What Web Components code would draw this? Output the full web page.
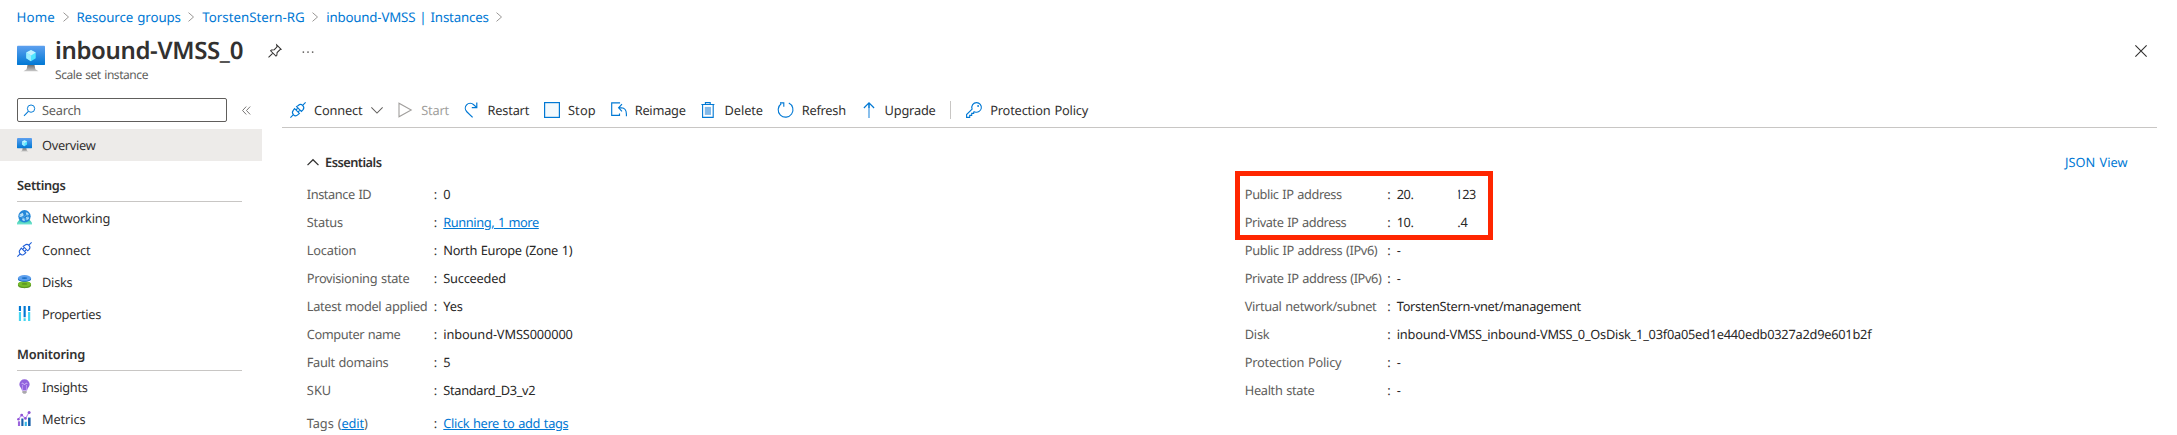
<!DOCTYPE html>
<html lang="en">
<head>
<meta charset="utf-8">
<title>inbound-VMSS_0 - Azure</title>
<style>
html,body{margin:0;background:#fff;}
body{width:2177px;height:435px;overflow:hidden;font:12.8px/20px "Noto Sans","Open Sans",sans-serif;color:#323130;text-rendering:geometricPrecision;word-spacing:.8px;}
</style>
</head>
<body>
<az-blade></az-blade>
<script>
const ICONS = {
  vm:'<defs><linearGradient id="a" x1="0" y1="0" x2="0" y2="1"><stop offset="0" stop-color="#5ea0ef"/><stop offset="1" stop-color="#0078d4"/></linearGradient><linearGradient id="b" x1="0" y1="0" x2="0" y2="1"><stop offset="0" stop-color="#707070"/><stop offset="1" stop-color="#c8c8c8"/></linearGradient></defs><path d="M6 12h4l.5 2.4 1.8 1.1H3.7l1.8-1.1z" fill="url(#b)"/><rect y="1" width="16" height="11" rx=".5" fill="url(#a)"/><path d="M8 3.4l2.7 1.5v3.2L8 9.8 5.3 8.1V4.9z" fill="#50e6ff"/><path d="M8 3.4l2.7 1.5L8 6.5 5.3 4.9z" fill="#c3f1ff"/><path d="M5.3 4.9L8 6.5v3.3L5.3 8.1z" fill="#9cebff"/>',
  plug:'<g fill="none" stroke="currentColor" stroke-width="1.15"><path d="M.4 15.6l3-3M12.6 3.4l3-3"/><path d="M4.6 6.6L9.4 11.4 8 12.7c-1.3 1.2-3.3 1.3-4.500.1s-1.200-3.300-.1-4.600z"/><path d="M6.600 4.600l4.800 4.800 1.300-1.300c1.200-1.300 1.300-3.300.1-4.500s-3.300-1.200-4.500-.1z"/><path d="M5.900 8l1.700-1.700M8 10.100l1.700-1.700"/></g>',
  play:'<path d="M2 1.2v13.6L14.2 8z" fill="none" stroke="#a19f9d" stroke-width="1.1"/>',
  restart:'<path d="M8.6 15.4L2.8 9.7A5 5 0 0 1 2.6 2.8a5 5 0 0 1 7.1-.1L12.6 5.4M12.8.6v5H7.8" fill="none" stroke="#0078d4" stroke-width="1.2"/>',
  stop:'<rect x=".6" y=".6" width="14.8" height="14.8" fill="#f3f9fd" stroke="#0078d4" stroke-width="1.2"/>',
  reimage:'<path d="M8.5 1.5V.8H.7v12.6h7.8v-2M11 2.2L7.6 5.8 11 9.4M7.8 5.8h2.6c3.3.2 5 2.7 5 6.3v2.2" fill="none" stroke="#0078d4" stroke-width="1.15"/>',
  trash:'<path d="M1.4 2.5h13M5.4 2.3V.6h4.8v1.7M2.6 2.7v12.7h10.6V2.7" fill="none" stroke="#0078d4" stroke-width="1.1"/><path d="M4.8 4.9h6.2v8H4.8z" fill="#83b9e8"/>',
  refresh:'<path d="M3.2 1.8A7.4 7.4 0 1 0 10.8 1.1M2 .9h3.8v3.9" fill="none" stroke="#0078d4" stroke-width="1.1"/>',
  up:'<path d="M8 2v14" stroke="#6cb0e8" stroke-width="1.6"/><path d="M2.9 6L8 .9 13.1 6M8 1v5" fill="none" stroke="#0078d4" stroke-width="1.2"/>',
  key:'<path d="M10.6.6a4.8 4.8 0 0 0-4.5 6.5L.6 12.6v2.8h3.1v-2h2v-2h2V10l1.2-.1A4.8 4.8 0 1 0 10.6.6z" fill="none" stroke="#0078d4" stroke-width="1.1"/><circle cx="12.1" cy="4" r=".9" fill="#0078d4"/>',
  search:'<circle cx="9.9" cy="5.7" r="4.5" fill="none" stroke="#0078d4" stroke-width="1.2"/><path d="M6.6 9.2L1.2 14.6" stroke="#0078d4" stroke-width="1.3"/>',
  globe:'<defs><linearGradient id="g" x1="0" y1="0" x2="0" y2="1"><stop offset="0" stop-color="#29c3a5"/><stop offset="1" stop-color="#79e6d3"/></linearGradient></defs><path d="M0 15.5v-2L2.8 10h10.4l2.8 3.5v2z" fill="url(#g)"/><circle cx="8" cy="6.7" r="6.6" fill="#2487d8"/><g fill="#b9e1f7"><path d="M3.1 4.4l3-1.4 1.1 2.5-2.6 2.3-2.2-.9zM9.4 2.5l2.4.6.8 2.2-2.6.2zM9.5 7.6l2.8-.5.4 2.1-2.4 1.6zM5.3 9.2l2.6-.3.5 2.8-2.2-.3z"/></g><path d="M3 5l3 3.4 5-4 .3 4.2-4.5 2.2" fill="none" stroke="#69b9ee" stroke-width=".6"/>',
  disks:'<path d="M1 11.2c0-2.1 3-3.3 7-3.3s7 1.2 7 3.3v.8c0 2-3 3.1-7 3.1S1 14 1 12z" fill="#5e9624"/><ellipse cx="8" cy="10.7" rx="7" ry="3.1" fill="#76bc2d"/><ellipse cx="8" cy="10.6" rx="3" ry=".9" fill="#5e9624"/><path d="M1 4.3h14v1C15 7.3 12 8.2 8 8.2S1 7.3 1 5.3z" fill="#1b6fc4"/><ellipse cx="8" cy="4.2" rx="7" ry="3.1" fill="#5ea0ef"/><ellipse cx="8" cy="4.3" rx="3" ry=".9" fill="#1b6fc4"/>',
  props:'<path d="M2 0h2.3v5.3H2zM7 0h2.3v12H7zM11.8 0h2.3v5.3h-2.3z" fill="#0078d4"/><path d="M2 6.3h2.3V16H2zM7 13h2.3v3H7zM11.8 6.3h2.3V16h-2.3z" fill="#45d5f0"/>',
  bulb:'<path d="M8 .3a5.5 5.5 0 0 1 5.5 5.4c0 2.8-2.3 3.8-2.8 6.5H5.3C4.8 9.5 2.5 8.5 2.5 5.7A5.5 5.5 0 0 1 8 .3z" fill="#9163dd"/><path d="M5.9 12.2V6.4M10.1 12.2V6.4" stroke="#c7a6f5" stroke-width=".8"/><path d="M5 4.8c1.5-1 2 1 3 1s1.5-2 3-1" fill="none" stroke="#e2cffc"/><path d="M5.7 12.7h4.6v1.8L9 15.7H7l-1.3-1.2z" fill="#aaa7ac"/>',
  chart:'<path d="M1 11h2.3v5H1z" fill="#9b64dc"/><path d="M4.6 8h2.3v8H4.6z" fill="#155ea8"/><path d="M8.2 11.5h2.3V16H8.2z" fill="#32b5e8"/><path d="M11.8 7h2.7v9h-2.7z" fill="#155ea8"/><path d="M1.3 9L5 4.3l4 3.6 3.7-6" fill="none" stroke="#b88df0" stroke-width="1.1"/><g fill="#8f52d6"><circle cx="1.5" cy="8.7" r="1.3"/><circle cx="5" cy="4.3" r="1.5"/><circle cx="9" cy="7.9" r="1.4"/><circle cx="12.9" cy="1.7" r="1.6"/></g>',
  pin:'<path d="M.6 15.4l5-5M9.9 1l5.1 5.1-1.4.5-3.2 3.2-.3 3.1-1 1L3 7.8l1-1 3.2-.3 3.1-3.2z" fill="none" stroke="#323130" stroke-width="1.15"/>',
  close:'<path d="M.5 .5l15 15M15.5 .5l-15 15" stroke="#323130" stroke-width="1.5"/>',
  dots:'<g fill="#605e5c"><circle cx="2.7" cy="8" r="1"/><circle cx="8" cy="8" r="1"/><circle cx="13.3" cy="8" r="1"/></g>',
  right:'<path d="M4 1l8 7-8 7" fill="none" stroke="#8a8886" stroke-width="1.4"/>',
  down:'<path d="M.5 4.5L8 12l7.5-7.5" fill="none" stroke="#605e5c" stroke-width="1.35"/>',
  chevup:'<path d="M.7 12.2L8 4.9l7.3 7.3" fill="none" stroke="#323130" stroke-width="1.7"/>',
  collapse:'<path d="M7.5 1L1 8l6.5 7M14.5 1L8 8l6.5 7" fill="none" stroke="#605e5c" stroke-width="1.5"/>'
};

const define = (name, html, setup) => {
  const tpl = document.createElement('template');
  tpl.innerHTML = html;
  customElements.define(name, class extends HTMLElement {
    connectedCallback() {
      if (this.shadowRoot) return;
      const root = this.attachShadow({mode:'open'});
      root.append(tpl.content.cloneNode(true));
      if (setup) setup(this, root);
    }
  });
};

// Text set to an advance width given in the "w" attribute.
const texts = [];
define('az-text', `<style>:host{display:inline-block;white-space:pre;flex:none}</style><slot></slot>`,
  host => texts.push(host));
const fitAll = () => {
  for (const t of texts) {
    const w = +t.getAttribute('w');
    if (!w) continue;
    const n = [...t.textContent].length;
    t.style.letterSpacing = ((w - t.getBoundingClientRect().width) / n).toFixed(4) + 'px';
    t.style.width = w + 'px';
  }
};

define('az-icon', `<style>:host{display:inline-block;flex:none;width:16px;height:16px}svg{display:block;width:100%;height:100%;overflow:visible}</style><svg viewBox="0 0 16 16"></svg>`,
  (host, root) => {
    root.querySelector('svg').innerHTML = ICONS[host.getAttribute('name')] || '';
    const s = host.getAttribute('size');
    if (s) host.style.width = host.style.height = s + 'px';
  });

define('az-crumbs', `<style>
:host{display:flex;align-items:center;height:34px;padding-left:16.500px;color:#0078d4;font-size:13.300px}
az-icon{margin:0 5.800px 0 5.600px}
</style>
<az-text w="38.500">Home</az-text><az-icon name="right" size="10"></az-icon>
<az-text w="104.500">Resource groups</az-text><az-icon name="right" size="10"></az-icon>
<az-text w="102.500">TorstenStern-RG</az-text><az-icon name="right" size="10"></az-icon>
<az-text w="162.500">inbound-VMSS | Instances</az-text><az-icon name="right" size="10"></az-icon>`);

define('az-title', `<style>
:host{display:flex;height:52px;padding-left:17px}
.logo{margin-top:10px}
.names{margin-left:9.500px;width:190px;display:flex;flex-direction:column;align-items:flex-start}
.t{font-size:24px;font-weight:600;line-height:32px;height:32px;margin:1px 0 0 .5px}
.s{font-size:12px;line-height:16px;color:#605e5c;margin-left:.5px}
.pin{margin:10px 0 0 23.500px}.dots{margin:10.500px 0 0 18.500px}
.close{margin:11px 30px 0 auto}
</style>
<az-icon class="logo" name="vm" size="28"></az-icon>
<div class="names"><az-text class="t" w="188">inbound-VMSS_0</az-text><az-text class="s" w="93">Scale set instance</az-text></div>
<az-icon class="pin" name="pin" size="14"></az-icon><az-icon class="dots" name="dots" size="14"></az-icon>
<az-icon class="close" name="close" size="12"></az-icon>`);

define('az-nav-item', `<style>
:host{display:flex;align-items:center;height:32px;padding-left:17px;color:#323130}
:host([selected]){background:#edebe9}
az-icon{margin:-2px 10px 0 0;color:#1f5fd8}
</style><az-icon size="15"></az-icon><az-text></az-text>`,
  (host, root) => {
    const i = root.querySelector('az-icon'), fresh = document.createElement('az-icon');
    fresh.setAttribute('name', host.getAttribute('icon'));
    fresh.setAttribute('size', 15);
    i.replaceWith(fresh);
    const t = root.querySelector('az-text');
    t.textContent = host.getAttribute('label');
    t.setAttribute('w', host.getAttribute('w'));
  });

define('az-nav-group', `<style>
:host{display:block}
.h{height:32px;margin:0 20px 0 17px;border-bottom:1px solid #c8c6c4;font-weight:600;line-height:32px}
</style><div class="h"><slot name="title"></slot></div><div class="items"><slot></slot></div>`);

define('az-sidebar', `<style>
:host{display:block;width:262px;flex:none}
.top{display:flex;align-items:center;padding-left:17px;margin-top:12px}
.box{box-sizing:border-box;width:210px;height:24px;border:1px solid #605e5c;border-radius:2px;display:flex;align-items:center;padding-left:5px;color:#605e5c}
.box az-text{margin-left:6px}
.top>az-icon{margin-left:14.500px}
.ov{margin-top:7px}
.g1,.g2{margin-top:8px}
</style>
<div class="top"><div class="box"><az-icon name="search" size="13"></az-icon><az-text w="39">Search</az-text></div><az-icon name="collapse" size="9"></az-icon></div>
<az-nav-item class="ov" selected icon="vm" label="Overview" w="53.500"></az-nav-item>
<az-nav-group class="g1"><az-text slot="title" w="48.500">Settings</az-text>
<az-nav-item icon="globe" label="Networking" w="68"></az-nav-item>
<az-nav-item icon="plug" label="Connect" w="48.500"></az-nav-item>
<az-nav-item icon="disks" label="Disks" w="30.500"></az-nav-item>
<az-nav-item icon="props" label="Properties" w="59"></az-nav-item></az-nav-group>
<az-nav-group class="g2"><az-text slot="title" w="68">Monitoring</az-text>
<az-nav-item icon="bulb" label="Insights" w="45.500"></az-nav-item>
<az-nav-item icon="chart" label="Metrics" w="43.500"></az-nav-item></az-nav-group>`);

define('az-command', `<style>
:host{display:flex;align-items:center;gap:8px;color:#323130}
:host([disabled]){color:#a19f9d}
.i{color:#0078d4}
</style><slot></slot>`,
  (host, root) => {
    const i = document.createElement('az-icon');
    i.className = 'i';
    i.setAttribute('name', host.getAttribute('icon'));
    root.insertBefore(i, root.querySelector('slot'));
  });

define('az-toolbar', `<style>
:host{display:flex;align-items:center;height:35px;padding:6px 0 0 8px;border-bottom:1px solid #c8c6c4;gap:14.800px;margin-right:20px}
.sep{width:1px;height:18px;background:#c8c6c4}
</style>
<az-command icon="plug"><az-text w="48.500">Connect</az-text><az-icon name="down" size="12"></az-icon></az-command>
<az-command disabled icon="play"><az-text w="27.500">Start</az-text></az-command>
<az-command icon="restart"><az-text w="41.500">Restart</az-text></az-command>
<az-command icon="stop"><az-text w="28">Stop</az-text></az-command>
<az-command icon="reimage"><az-text w="51">Reimage</az-text></az-command>
<az-command icon="trash"><az-text w="38.500">Delete</az-text></az-command>
<az-command icon="refresh"><az-text w="44">Refresh</az-text></az-command>
<az-command icon="up"><az-text w="51">Upgrade</az-text></az-command>
<div class="sep"></div>
<az-command icon="key"><az-text w="98">Protection Policy</az-text></az-command>`);

define('az-field', `<style>
:host{display:grid;grid-template-columns:var(--label,127px) 9.500px 1fr;line-height:28px;height:28px;color:#292827}
.l{color:#605e5c}.c{color:#323130}
</style><div class="l"><slot name="label"></slot></div><div class="c">:</div><div class="v"><slot></slot></div>`);

const link = 'color:#0078d4;text-decoration:underline';
const field = (label, lw, value, vw, attrs = '') =>
  `<az-field ${attrs}><az-text slot="label" w="${lw}">${label}</az-text><az-text w="${vw}">${value}</az-text></az-field>`;

define('az-essentials', `<style>
:host{display:block}
.head{display:flex;align-items:center;height:20px;margin:24px 49.500px 0 25px}
.head b{font-weight:600;margin-left:6px}
.head .json{margin-left:auto;color:#0078d4}
.cols{display:grid;grid-template-columns:938px 1fr;padding:8px 0 0 24.800px}
.right{--label:142.500px;position:relative}
.tags{margin-top:5px}
.gap{display:inline-block}
.one{clip-path:inset(0 0 0 3px)}
.mark{position:absolute;left:-10px;top:-9px;width:248px;height:58.500px;border:5px solid #ff2600}
a{${link}}
</style>
<div class="head"><az-icon name="chevup" size="12"></az-icon><b><az-text w="56.500">Essentials</az-text></b><az-text class="json" w="62.500">JSON View</az-text></div>
<div class="cols"><div class="left">
${field('Instance ID', 64.5, '0', 7.5)}
${field('Status', 36, '<a>Running, 1 more</a>', 95.5)}
${field('Location', 49.5, 'North Europe (Zone 1)', 129)}
${field('Provisioning state', 102.5, 'Succeeded', 62.5)}
${field('Latest model applied', 120.5, 'Yes', 19.5)}
${field('Computer name', 93.5, 'inbound-VMSS000000', 129.5)}
${field('Fault domains', 81.5, '5', 7.5)}
${field('SKU', 24.5, 'Standard_D3_v2', 92)}
${field('Tags (<a>edit</a>)', 61, '<a>Click here to add tags</a>', 125, 'class="tags"')}
</div><div class="right">
<az-field><az-text slot="label" w="97">Public IP address</az-text><az-text w="16.500">20.</az-text><span class="gap" style="width:42px"></span><az-text class="one" w="20.500">123</az-text></az-field>
<az-field><az-text slot="label" w="101.500">Private IP address</az-text><az-text w="16.500">10.</az-text><span class="gap" style="width:44px"></span><az-text w="10.500">.4</az-text></az-field>
${field('Public IP address (IPv6)', 132.5, '-', 5.2)}
${field('Private IP address (IPv6)', 136.5, '-', 5.2)}
${field('Virtual network/subnet', 131.5, 'TorstenStern-vnet/management', 184)}
${field('Disk', 24.5, 'inbound-VMSS_inbound-VMSS_0_OsDisk_1_03f0a05ed1e440edb0327a2d9e601b2f', 474.5)}
${field('Protection Policy', 96.5, '-', 5.2)}
${field('Health state', 69.5, '-', 5.2)}
<div class="mark"></div>
</div></div>`);

define('az-blade', `<style>
:host{display:block;width:2177px;height:435px;background:#fff}
.body{display:flex}
.main{flex:1;margin-left:20px;min-width:0}
</style>
<az-crumbs></az-crumbs><az-title></az-title>
<div class="body"><az-sidebar></az-sidebar><div class="main"><az-toolbar></az-toolbar><az-essentials></az-essentials></div></div>`);

fitAll();
</script>
</body>
</html>
